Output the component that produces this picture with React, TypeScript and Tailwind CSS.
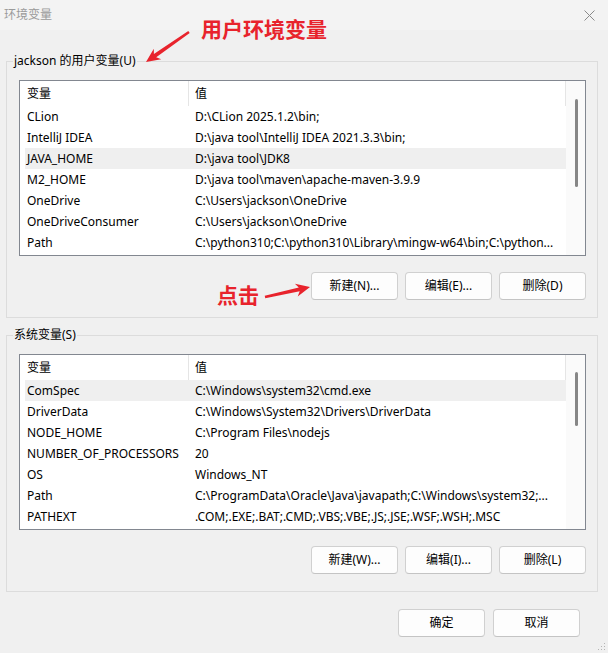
import type { ReactNode } from 'react'

/* ─── Data ────────────────────────────────────────────────────────────────── */

type Row = [string, string]

const USER_VARS: Row[] = [
  ['CLion', 'D:\\CLion 2025.1.2\\bin;'],
  ['IntelliJ IDEA', 'D:\\java tool\\IntelliJ IDEA 2021.3.3\\bin;'],
  ['JAVA_HOME', 'D:\\java tool\\JDK8'],
  ['M2_HOME', 'D:\\java tool\\maven\\apache-maven-3.9.9'],
  ['OneDrive', 'C:\\Users\\jackson\\OneDrive'],
  ['OneDriveConsumer', 'C:\\Users\\jackson\\OneDrive'],
  ['Path', 'C:\\python310;C:\\python310\\Library\\mingw-w64\\bin;C:\\python...'],
]

const SYSTEM_VARS: Row[] = [
  ['ComSpec', 'C:\\Windows\\system32\\cmd.exe'],
  ['DriverData', 'C:\\Windows\\System32\\Drivers\\DriverData'],
  ['NODE_HOME', 'C:\\Program Files\\nodejs'],
  ['NUMBER_OF_PROCESSORS', '20'],
  ['OS', 'Windows_NT'],
  ['Path', 'C:\\ProgramData\\Oracle\\Java\\javapath;C:\\Windows\\system32;...'],
  ['PATHEXT', '.COM;.EXE;.BAT;.CMD;.VBS;.VBE;.JS;.JSE;.WSF;.WSH;.MSC'],
]

/* ─── Pieces ──────────────────────────────────────────────────────────────── */

function Button({ children }: { children: ReactNode }) {
  return (
    <button className="h-[28px] w-[87px] rounded-[4px] border border-[#d0d0d0] border-b-[#c4c4c4] bg-[#fdfdfd] text-[12px] text-black">
      {children}
    </button>
  )
}

function VarList({ rows, selected, thumbTop, thumbH }: { rows: Row[]; selected: number; thumbTop: string; thumbH: string }) {
  return (
    <div className="ml-[12px] flex h-[176px] w-[567px] border border-[#828790] bg-white">
      <div className="flex w-[546px] flex-col">
        <div className="flex h-[25px] items-center border-r border-[#e5e5e5]">
          <div className="w-[168px] pl-[7px]">变量</div>
          <div className="h-full w-px bg-[#e5e5e5]" />
          <div className="pl-[6px]">值</div>
        </div>
        {rows.map(([name, value], i) => (
          <div
            key={name}
            className={`ml-[5px] flex h-[21px] items-center whitespace-nowrap ${i === selected ? 'bg-[#efefef]' : ''}`}
          >
            <div className="w-[168px] overflow-hidden pl-[2px]">{name}</div>
            <div className="flex-1 overflow-hidden pl-[2px]">{value}</div>
          </div>
        ))}
      </div>
      <div className="flex w-[19px] flex-col bg-[#fafafa]">
        <div className={`ml-[9px] w-[3px] rounded-full bg-[#868686] ${thumbTop} ${thumbH}`} />
      </div>
    </div>
  )
}

function Group({ legend, children }: { legend: string; children: ReactNode }) {
  return (
    <div className="ml-[6px] w-[592px] border border-[#dcdcdc]">
      <span className="-mt-[9px] ml-[6px] block w-fit bg-[#f0f0f0] px-[1px] leading-[16px]">{legend}</span>
      {children}
    </div>
  )
}

function arrow(x1: number, y1: number, x2: number, y2: number) {
  const len = Math.hypot(x2 - x1, y2 - y1)
  const ux = (x2 - x1) / len
  const uy = (y2 - y1) / len
  const nx = -uy
  const ny = ux
  const H = 14
  const W = 6.5
  const bx = x2 - ux * H
  const by = y2 - uy * H
  const jx = x2 - ux * (H - 3)
  const jy = y2 - uy * (H - 3)
  const p = (x: number, y: number) => `${x.toFixed(1)},${y.toFixed(1)}`
  return [
    p(x1 + nx * 1.2, y1 + ny * 1.2),
    p(jx + nx * 2, jy + ny * 2),
    p(bx + nx * W, by + ny * W),
    p(x2, y2),
    p(bx - nx * W, by - ny * W),
    p(jx - nx * 2, jy - ny * 2),
    p(x1 - nx * 1.2, y1 - ny * 1.2),
  ].join(' ')
}

/* ─── App ─────────────────────────────────────────────────────────────────── */

export default function App() {
  return (
    <div className="relative h-[653px] w-[608px] overflow-hidden bg-[#f0f0f0] font-['Noto_Sans','Noto_Sans_CJK_SC',sans-serif] text-[12px] text-black">
      {/* Title bar */}
      <div className="flex h-[30px] items-center justify-between bg-[#f3f3f3] pl-[4px] pr-[13px]">
        <span className="text-[#9a9a9a]">环境变量</span>
        <svg width="11" height="11" viewBox="0 0 11 11">
          <path d="M0.5 0.5 L10.5 10.5 M10.5 0.5 L0.5 10.5" stroke="#8a8a8a" strokeWidth="1" />
        </svg>
      </div>

      <div className="mt-[31px]">
        <Group legend="jackson 的用户变量(U)">
          <div className="mt-[11px]">
            <VarList rows={USER_VARS} selected={2} thumbTop="mt-[18px]" thumbH="h-[88px]" />
          </div>
          <div className="mb-[17px] mt-[16px] flex justify-end gap-[7px] pr-[11px]">
            <Button>新建(N)...</Button>
            <Button>编辑(E)...</Button>
            <Button>删除(D)</Button>
          </div>
        </Group>
      </div>

      <div className="mt-[17px]">
        <Group legend="系统变量(S)">
          <div className="mt-[11px]">
            <VarList rows={SYSTEM_VARS} selected={0} thumbTop="mt-[17px]" thumbH="h-[54px]" />
          </div>
          <div className="mb-[17px] mt-[16px] flex justify-end gap-[7px] pr-[11px]">
            <Button>新建(W)...</Button>
            <Button>编辑(I)...</Button>
            <Button>删除(L)</Button>
          </div>
        </Group>
      </div>

      <div className="mt-[17px] flex justify-end gap-[8px] pr-[28px]">
        <Button>确定</Button>
        <Button>取消</Button>
      </div>

      {/* Annotations */}
      <span className="absolute left-[201px] top-[18px] font-['Noto_Sans_CJK_SC',sans-serif] text-[21px] font-bold leading-none text-[#e8232c]">
        用户环境变量
      </span>
      <span className="absolute left-[217px] top-[284px] font-['Noto_Sans_CJK_SC',sans-serif] text-[21px] font-bold leading-none text-[#e8232c]">
        点击
      </span>
      <svg className="pointer-events-none absolute left-0 top-0" width="608" height="653">
        <polygon points={arrow(189, 32, 146, 62)} fill="#e8232c" />
        <polygon points={arrow(265, 297, 310, 287)} fill="#e8232c" />
        <g fill="#b4b4b4">
          <rect x="604" y="643" width="1" height="1" />
          <rect x="604" y="646" width="1" height="1" />
          <rect x="601" y="646" width="1" height="1" />
          <rect x="604" y="649" width="1" height="1" />
          <rect x="601" y="649" width="1" height="1" />
          <rect x="598" y="649" width="1" height="1" />
        </g>
      </svg>
    </div>
  )
}
